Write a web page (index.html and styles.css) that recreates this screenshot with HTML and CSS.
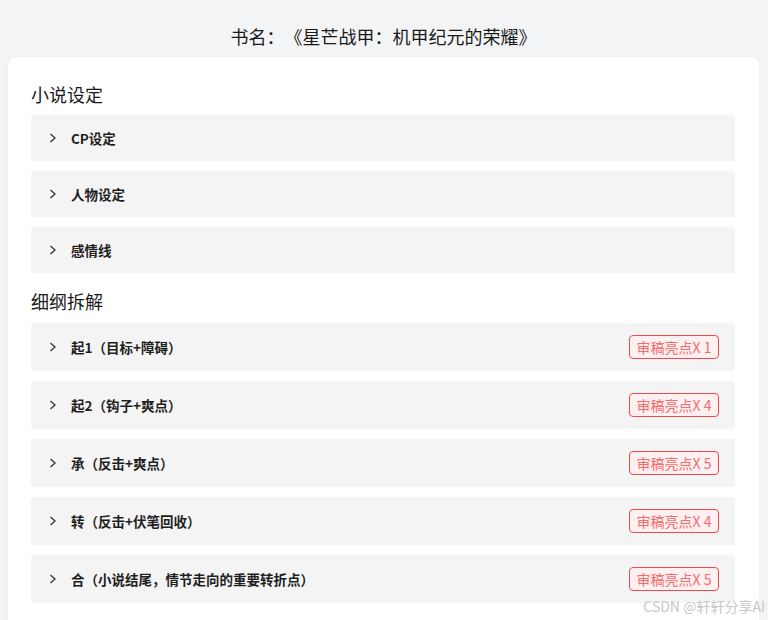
FILE: index.html
```html
<!DOCTYPE html>
<html lang="zh">
<head>
<meta charset="utf-8">
<link rel="stylesheet" href="styles.css">
</head>
<body>
<div class="page">
  <h1 class="book-title">书名：《星芒战甲：机甲纪元的荣耀》</h1>
  <div class="card">
    <h2 class="section-title">小说设定</h2>
    <div class="item"><span class="chev"><svg width="8" height="10" viewBox="0 0 8 10"><path d="M1.5 1 L6 5 L1.5 9" fill="none" stroke="#333" stroke-width="1.3"/></svg></span><span class="label">CP设定</span></div>
    <div class="item"><span class="chev"><svg width="8" height="10" viewBox="0 0 8 10"><path d="M1.5 1 L6 5 L1.5 9" fill="none" stroke="#333" stroke-width="1.3"/></svg></span><span class="label">人物设定</span></div>
    <div class="item"><span class="chev"><svg width="8" height="10" viewBox="0 0 8 10"><path d="M1.5 1 L6 5 L1.5 9" fill="none" stroke="#333" stroke-width="1.3"/></svg></span><span class="label">感情线</span></div>

    <h2 class="section-title second">细纲拆解</h2>
    <div class="item tall"><span class="chev"><svg width="8" height="10" viewBox="0 0 8 10"><path d="M1.5 1 L6 5 L1.5 9" fill="none" stroke="#333" stroke-width="1.3"/></svg></span><span class="label">起1（目标+障碍）</span><span class="badge">审稿亮点X 1</span></div>
    <div class="item tall"><span class="chev"><svg width="8" height="10" viewBox="0 0 8 10"><path d="M1.5 1 L6 5 L1.5 9" fill="none" stroke="#333" stroke-width="1.3"/></svg></span><span class="label">起2（钩子+爽点）</span><span class="badge">审稿亮点X 4</span></div>
    <div class="item tall"><span class="chev"><svg width="8" height="10" viewBox="0 0 8 10"><path d="M1.5 1 L6 5 L1.5 9" fill="none" stroke="#333" stroke-width="1.3"/></svg></span><span class="label">承（反击+爽点）</span><span class="badge">审稿亮点X 5</span></div>
    <div class="item tall"><span class="chev"><svg width="8" height="10" viewBox="0 0 8 10"><path d="M1.5 1 L6 5 L1.5 9" fill="none" stroke="#333" stroke-width="1.3"/></svg></span><span class="label">转（反击+伏笔回收）</span><span class="badge">审稿亮点X 4</span></div>
    <div class="item tall"><span class="chev"><svg width="8" height="10" viewBox="0 0 8 10"><path d="M1.5 1 L6 5 L1.5 9" fill="none" stroke="#333" stroke-width="1.3"/></svg></span><span class="label">合（小说结尾，情节走向的重要转折点）</span><span class="badge">审稿亮点X 5</span></div>
  </div>
</div>
<div class="watermark">CSDN @轩轩分享AI</div>
</body>
</html>
```
FILE: styles.css
```css
html, body {
  margin: 0;
  padding: 0;
  background: #f3f4f5;
  font-family: "Noto Sans CJK SC", "Noto Sans", sans-serif;
  color: #222;
  overflow: hidden;
  height: 620px;
  text-spacing-trim: space-all;
}
.page {
  padding: 0 9px 0 8px;
}
.book-title {
  margin: 0;
  padding-top: 24px;
  height: 33px;
  line-height: 24px;
  font-size: 18px;
  font-weight: 400;
  text-align: center;
  color: #1a1a1a;
}
.card {
  background: #fff;
  border-radius: 8px 8px 0 0;
  padding: 25px 24px 0 23px;
  height: 563px;
  box-sizing: border-box;
  overflow: hidden;
  box-shadow: 0 0 3px rgba(0,0,0,0.04);
}
.section-title {
  margin: 0 0 9px 0;
  font-size: 18px;
  line-height: 24px;
  font-weight: 400;
  color: #1a1a1a;
}
.section-title.second {
  margin-top: 16px;
  margin-bottom: 10px;
}
.item {
  display: flex;
  align-items: center;
  height: 46px;
  background: #f4f4f4;
  border-radius: 4px;
  padding: 0 16px 0 18px;
  margin-bottom: 10px;
  box-sizing: border-box;
}
.item.tall {
  height: 48px;
}
.chev {
  display: flex;
  width: 8px;
  margin-right: 14px;
}
.label {
  flex: 1;
  font-size: 13.5px;
  font-weight: 700;
  color: #1f1f1f;
}
.badge {
  border: 1px solid #f24b4b;
  background: #fef0f0;
  color: #f56c6c;
  border-radius: 4px;
  font-size: 14px;
  line-height: 22px;
  height: 24px;
  box-sizing: border-box;
  padding: 0 6px;
  width: 90px;
  text-align: center;
  white-space: nowrap;
}
.watermark {
  position: absolute;
  right: 3px;
  top: 596px;
  font-size: 14px;
  color: #c8c8c8;
  font-family: "Noto Sans CJK SC", sans-serif;
  text-shadow: 0 0 1px #fff;
}
```
